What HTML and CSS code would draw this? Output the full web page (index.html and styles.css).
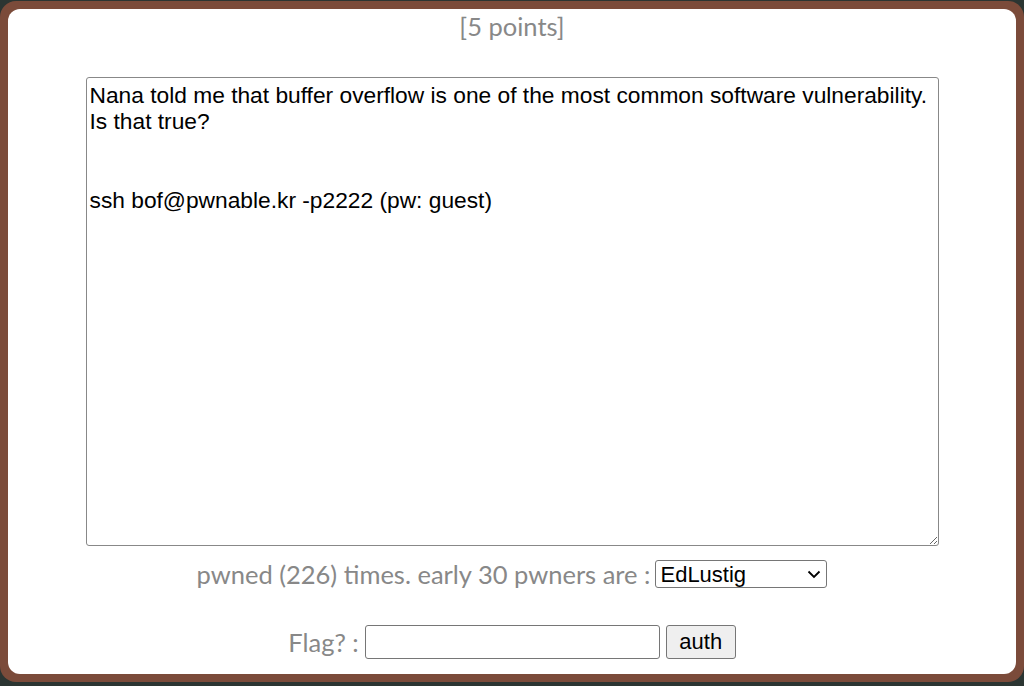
FILE: index.html
```html
<!DOCTYPE html>
<html lang="en">
<head>
    <meta charset="UTF-8">
    <meta name="viewport" content="width=device-width, initial-scale=1.0">
    <title>bof</title>
    <link rel="stylesheet" href="styles.css">
</head>
<body>
    <div class="frame">
        <div class="panel">
            <div class="points">[5 points]</div>

            <textarea class="desc" readonly>Nana told me that buffer overflow is one of the most common software vulnerability. 
Is that true?


ssh bof@pwnable.kr -p2222 (pw: guest)</textarea>

            <div class="pwned">
                <span>pwned (226) times. early 30 pwners are :</span>
                <span class="select-wrap">
                    <select class="pwners">
                        <option>EdLustig</option>
                        <option>n0psl3d</option>
                        <option>gooroo</option>
                    </select>
                    <svg class="chevron" width="14" height="9" viewBox="0 0 14 9">
                        <path d="M1.5 1.5 L7 7 L12.5 1.5" fill="none" stroke="#000" stroke-width="1.8"/>
                    </svg>
                </span>
            </div>

            <form class="flag" onsubmit="return false;">
                <span>Flag? :</span>
                <input type="text" class="flag-input">
                <button type="submit">auth</button>
            </form>
        </div>
    </div>
</body>
</html>
```

FILE: styles.css
```css
html, body {
    margin: 0;
    height: 100%;
}
body {
    background-color: #2b3532;
    overflow: hidden;
}
.frame {
    margin-top: 1px;
    height: 681px;
    box-sizing: border-box;
    background-color: #7b4b3a;
    border-radius: 16px;
    padding: 8px;
}
.panel {
    height: 100%;
    background-color: #fff;
    border-radius: 12px;
    display: flex;
    flex-direction: column;
    align-items: center;
    font-family: Lato, "Open Sans", sans-serif;
    color: #888;
    font-size: 25.5px;
}
.points {
    line-height: 34px;
}
.desc {
    margin-top: 34px;
    width: 853px;
    height: 469px;
    box-sizing: border-box;
    border: 1px solid #888;
    border-radius: 3px;
    padding: 4px 3px 3px;
    font-family: "Liberation Sans", Arial, sans-serif;
    font-size: 22.75px;
    line-height: 26.3px;
    color: #000;
    outline: none;
}
.pwned {
    margin-top: 13px;
    display: flex;
    align-items: center;
    gap: 5px;
}
.select-wrap {
    position: relative;
    display: inline-flex;
}
.pwners {
    appearance: none;
    width: 172px;
    height: 28px;
    border: 1px solid #767676;
    border-radius: 3px;
    background-color: #fff;
    padding: 0 4px;
    font-family: "Liberation Sans", Arial, sans-serif;
    font-size: 22px;
    color: #000;
}
.chevron {
    position: absolute;
    right: 6px;
    top: 10px;
    pointer-events: none;
}
.flag {
    margin: 36px 0 0 0;
    display: flex;
    align-items: center;
    gap: 6px;
}
.flag-input {
    width: 295px;
    height: 34px;
    box-sizing: border-box;
    border: 1px solid #767676;
    border-radius: 3px;
}
.flag button {
    width: 70px;
    height: 34px;
    border: 1px solid #767676;
    border-radius: 3px;
    background-color: #efefef;
    font-family: "Liberation Sans", Arial, sans-serif;
    font-size: 22px;
    color: #000;
}
```
